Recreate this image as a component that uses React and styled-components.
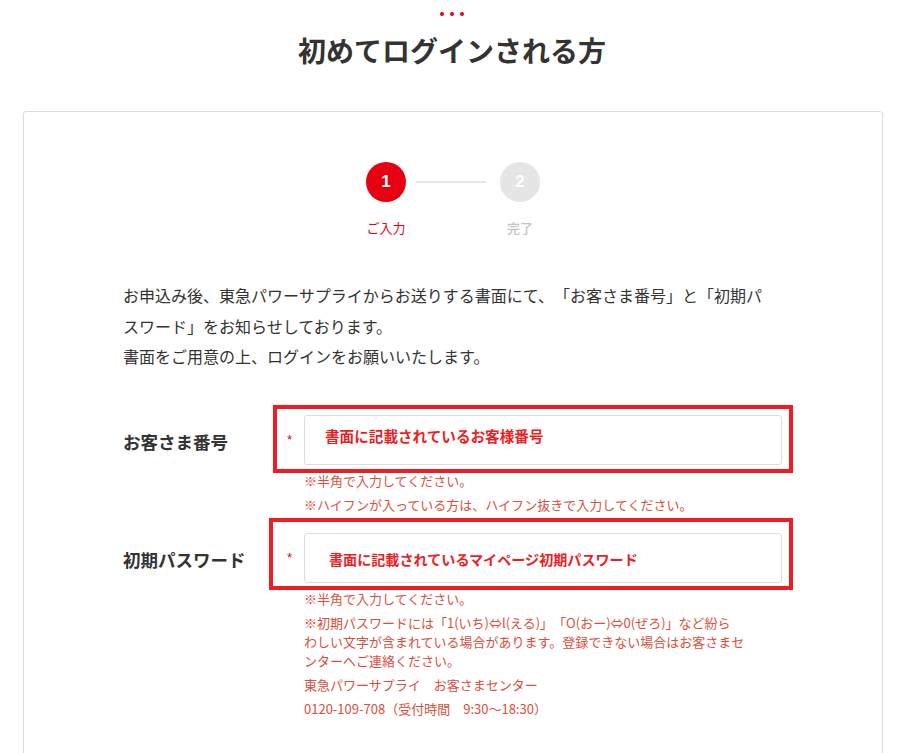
import React from "react";
import styled, { createGlobalStyle } from "styled-components";

const Global = createGlobalStyle`
  html, body { margin: 0; padding: 0; background: #fff; }
  body {
    font-family: "Noto Sans CJK JP", "Noto Sans", sans-serif;
    color: #333;
    text-spacing-trim: space-all;
  }
`;

const Page = styled.div`
  width: 904px;
  padding-top: 12px;
`;

const Dots = styled.div`
  display: flex;
  justify-content: center;
  gap: 6px;
`;

const Dot = styled.span`
  width: 4px;
  height: 4px;
  border-radius: 50%;
  background: #e60012;
`;

const Title = styled.h1`
  margin: 14px 0 0;
  text-align: center;
  font-size: 28px;
  font-weight: 700;
  line-height: 40px;
  color: #333;
`;

const Card = styled.section`
  margin: 41px 0 0 23px;
  width: 860px;
  border: 1px solid #ddd;
  border-radius: 3px;
  padding: 50px 99px 40px;
  box-sizing: border-box;
  min-height: 700px;
`;

const Steps = styled.div`
  display: flex;
  justify-content: center;
  align-items: flex-start;
`;

const Step = styled.div`
  width: 60px;
  display: flex;
  flex-direction: column;
  align-items: center;
`;

const Circle = styled.div`
  width: 40px;
  height: 40px;
  border-radius: 50%;
  background: ${p => (p.$active ? "#e60012" : "#e5e5e5")};
  color: #fff;
  font-family: "Liberation Sans", Arial, sans-serif;
  font-weight: 700;
  font-size: 17px;
  display: flex;
  align-items: center;
  justify-content: center;
`;

const StepLabel = styled.div`
  margin-top: 17px;
  font-size: 13px;
  line-height: 18px;
  color: ${p => (p.$active ? "#e60012" : "#c4c4c4")};
  font-weight: ${p => (p.$active ? 400 : 500)};
`;

const Connector = styled.div`
  width: 70px;
  height: 2px;
  background: #e5e5e5;
  margin: 19px 4px 0 0;
`;

const Intro = styled.p`
  margin: 43px 0 0;
  width: 650px;
  font-size: 16px;
  line-height: 30.5px;
  color: #333;
`;

const Form = styled.div`
  margin-top: 43px;
  display: flex;
  flex-direction: column;
  gap: 19px;
`;

const Row = styled.div`
  display: grid;
  grid-template-columns: 160px 21px 478px;
  align-items: start;
`;

const Label = styled.div`
  grid-column: 1;
  height: 50px;
  box-sizing: border-box;
  padding-top: 4px;
  display: flex;
  align-items: center;
  font-size: 17.5px;
  font-weight: 700;
  color: #333;
`;

const Required = styled.div`
  grid-column: 2;
  height: 50px;
  display: flex;
  align-items: center;
  padding-left: 4px;
  color: #e60012;
  font-size: 13px;
  font-family: "Liberation Sans", Arial, sans-serif;
`;

const FieldCol = styled.div`
  grid-column: 3;
  position: relative;
`;

const Input = styled.div`
  height: 50px;
  box-sizing: border-box;
  border: 1px solid #ddd;
  border-radius: 3px;
  display: flex;
  align-items: center;
  padding-left: ${p => p.$indent}px;
  padding-top: ${p => p.$pt || 0}px;
  padding-bottom: ${p => p.$pb || 0}px;
  font-size: ${p => p.$size}px;
  font-weight: 700;
  color: #ee1d23;
  background: #fff;
`;

const Highlight = styled.div`
  position: absolute;
  left: ${p => p.$left}px;
  top: ${p => p.$top}px;
  width: ${p => p.$w}px;
  height: ${p => p.$h}px;
  border: 4px solid #ee1d23;
  box-sizing: border-box;
  pointer-events: none;
`;

const Notes = styled.div`
  margin-top: 6px;
  display: flex;
  flex-direction: column;
  gap: 5px;
`;

const Note = styled.p`
  margin: 0;
  font-size: 13px;
  line-height: 19px;
  color: #dc4e3c;
`;

export default function App() {
  return (
    <Page>
      <Global />
      <Dots>
        <Dot />
        <Dot />
        <Dot />
      </Dots>
      <Title>初めてログインされる方</Title>
      <Card>
        <Steps>
          <Step>
            <Circle $active>1</Circle>
            <StepLabel $active>ご入力</StepLabel>
          </Step>
          <Connector />
          <Step>
            <Circle>2</Circle>
            <StepLabel>完了</StepLabel>
          </Step>
        </Steps>
        <Intro>
          お申込み後、東急パワーサプライからお送りする書面にて、「お客さま番号」と「初期パスワード」をお知らせしております。
          <br />
          書面をご用意の上、ログインをお願いいたします。
        </Intro>
        <Form>
          <Row>
            <Label>お客さま番号</Label>
            <Required>*</Required>
            <FieldCol>
              <Input $indent={20} $pb={8} $size={14.6}>書面に記載されているお客様番号</Input>
              <Highlight $left={-31} $top={-10} $w={520} $h={68} />
              <Notes>
                <Note>※半角で入力してください。</Note>
                <Note>※ハイフンが入っている方は、ハイフン抜きで入力してください。</Note>
              </Notes>
            </FieldCol>
          </Row>
          <Row>
            <Label>初期パスワード</Label>
            <Required>*</Required>
            <FieldCol>
              <Input $indent={24} $pt={2} $size={14.1}>書面に記載されているマイページ初期パスワード</Input>
              <Highlight $left={-35} $top={-15} $w={524} $h={72} />
              <Notes>
                <Note>※半角で入力してください。</Note>
                <Note>
                  ※初期パスワードには「1(いち)⇔l(える)」「O(おー)⇔0(ぜろ)」など紛ら
                  <br />
                  わしい文字が含まれている場合があります。登録できない場合はお客さまセ
                  <br />
                  ンターへご連絡ください。
                </Note>
                <Note>東急パワーサプライ　お客さまセンター</Note>
                <Note>0120-109-708（受付時間　9:30～18:30）</Note>
              </Notes>
            </FieldCol>
          </Row>
        </Form>
      </Card>
    </Page>
  );
}
